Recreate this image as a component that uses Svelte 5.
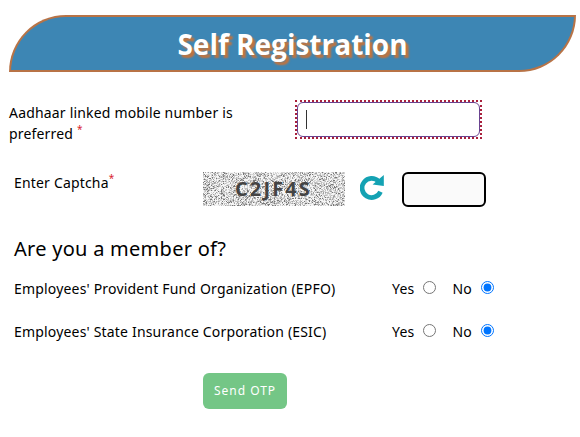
<script lang="ts">
  let mobile = $state("");
  let captcha = $state("");

  const captchaText = "C2JF4S";

  let schemes = $state([
    { id: "epfo", label: "Employees' Provident Fund Organization (EPFO)", member: "no" },
    { id: "esic", label: "Employees' State Insurance Corporation (ESIC)", member: "no" },
  ]);

  // speckles behind the captcha letters, grouped by shade
  const shades = ["#777", "#a2a2a2", "#bebebe", "#d6d6d6"];

  function speckle(width: number, height: number) {
    const paths = shades.map(() => "");
    let seed = 4271;
    const next = () => {
      seed = (seed * 16807) % 2147483647;
      return seed / 2147483647;
    };
    for (let y = 0; y < height; y++) {
      for (let x = 0; x < width; x++) {
        const v = next();
        const i = v < 0.09 ? 0 : v < 0.21 ? 1 : v < 0.38 ? 2 : v < 0.64 ? 3 : -1;
        if (i >= 0) paths[i] += `M${x} ${y}h1v1h-1z`;
      }
    }
    return paths;
  }

  const noise = speckle(142, 34);
</script>

<main class="page">
  <h1 class="banner">Self Registration</h1>

  <form onsubmit={(e) => e.preventDefault()}>
    <div class="row mobile-row">
      <label class="mobile-label" for="mobile">
        Aadhaar linked mobile number is preferred <sup>*</sup>
      </label>
      <div class="mobile-field">
        <input id="mobile" type="text" bind:value={mobile} />
        <span class="caret"></span>
      </div>
    </div>

    <div class="row captcha-row">
      <label class="captcha-label" for="captcha">Enter Captcha<sup>*</sup></label>
      <svg class="captcha" width="142" height="34" viewBox="0 0 142 34">
        <rect width="142" height="34" fill="#f6f6f6" />
        {#each noise as d, i}
          <path {d} fill={shades[i]} shape-rendering="crispEdges" />
        {/each}
        <text x="32" y="23.5" textLength="75">{captchaText}</text>
      </svg>
      <button class="refresh" type="button" aria-label="Refresh captcha">
        <svg width="24" height="25" viewBox="0 0 24 25">
          <path d="M18.5 6.2A9.6 9.6 0 1 0 20.5 16.8" fill="none" stroke="#14a2b3" stroke-width="4.7" />
          <path d="M23.8 0v11L12.6 9.4z" fill="#14a2b3" />
        </svg>
      </button>
      <input id="captcha" class="captcha-input" type="text" bind:value={captcha} />
    </div>

    <h2>Are you a member of?</h2>

    {#each schemes as scheme}
      <div class="row scheme-row">
        <span class="scheme-label">{scheme.label}</span>
        <label class="choice yes">
          Yes <input type="radio" name={scheme.id} value="yes" bind:group={scheme.member} />
        </label>
        <label class="choice">
          No <input type="radio" name={scheme.id} value="no" bind:group={scheme.member} />
        </label>
      </div>
    {/each}

    <button class="send" type="submit">Send OTP</button>
  </form>
</main>

<style>
  :global(body) {
    background: #fff;
  }

  .page {
    box-sizing: border-box;
    color: #000;
    font-family: "Noto Sans", "Open Sans", sans-serif;
    font-size: 14px;
    height: 437px;
    letter-spacing: 0.18px;
    overflow: hidden;
    padding: 15px 4px 0 9px;
  }

  .banner {
    background: #3d86b4;
    border: 2px solid #b87346;
    border-radius: 57px 0;
    box-sizing: border-box;
    color: #fff;
    font-family: "Open Sans", sans-serif;
    font-size: 28px;
    font-weight: 700;
    height: 57px;
    letter-spacing: 0;
    line-height: 54px;
    margin: 0;
    text-align: center;
    text-shadow: 3px 3px 2px #c4733c;
  }

  .row {
    display: flex;
  }

  sup {
    color: #d9232e;
    font-size: 10px;
    line-height: 0;
    vertical-align: super;
  }

  .mobile-row {
    height: 40px;
    padding-top: 28px;
  }

  .mobile-label {
    line-height: 21px;
    margin-top: 2px;
    width: 286px;
    padding-right: 40px;
    box-sizing: border-box;
  }

  .mobile-field {
    border: 2px dotted #a8203c;
    box-sizing: border-box;
    height: 39px;
    position: relative;
    width: 187px;
  }

  .mobile-field input {
    background: #fff;
    border: 1px solid #6a4390;
    border-radius: 6px;
    box-sizing: border-box;
    display: block;
    height: 35px;
    outline: none;
    padding: 0 8px;
    width: 183px;
  }

  .caret {
    background: #333;
    height: 19px;
    left: 9px;
    position: absolute;
    top: 8px;
    width: 1px;
  }

  .captcha-row {
    height: 35px;
    padding: 32px 0 0 5px;
  }

  .captcha-label {
    line-height: 21px;
    width: 189px;
  }

  .captcha text {
    fill: #444;
    font-family: "Open Sans", sans-serif;
    font-size: 20px;
    font-weight: 700;
  }

  .refresh {
    background: none;
    border: 0;
    height: 25px;
    margin: 3px 18px 0 15px;
    padding: 0;
    width: 24px;
  }

  .refresh svg {
    display: block;
  }

  .captcha-input {
    background: #fafafa;
    border: 2px solid #000;
    border-radius: 6px;
    box-sizing: border-box;
    height: 35px;
    outline: none;
    width: 84px;
  }

  h2 {
    font-size: 20px;
    font-weight: 400;
    letter-spacing: 0.27px;
    line-height: 28px;
    margin: 28px 0 0 5px;
  }

  .scheme-row {
    align-items: center;
    height: 21px;
    margin: 15px 0 22px 5px;
  }

  .scheme-row + .scheme-row {
    margin-top: 0;
  }

  .scheme-label {
    width: 378px;
  }

  .choice {
    align-items: center;
    display: flex;
    gap: 9px;
  }

  .yes {
    width: 60.5px;
  }

  .choice input {
    height: 13px;
    margin: 0 0 3px;
    width: 13px;
  }

  .send {
    background: #74c686;
    border: 0;
    border-radius: 6px;
    color: #fff;
    display: block;
    font-family: "Noto Sans", "Open Sans", sans-serif;
    font-size: 12px;
    height: 36px;
    letter-spacing: 1px;
    margin: 31px 0 0 194px;
    padding: 0 0 1px;
    width: 84px;
  }
</style>
